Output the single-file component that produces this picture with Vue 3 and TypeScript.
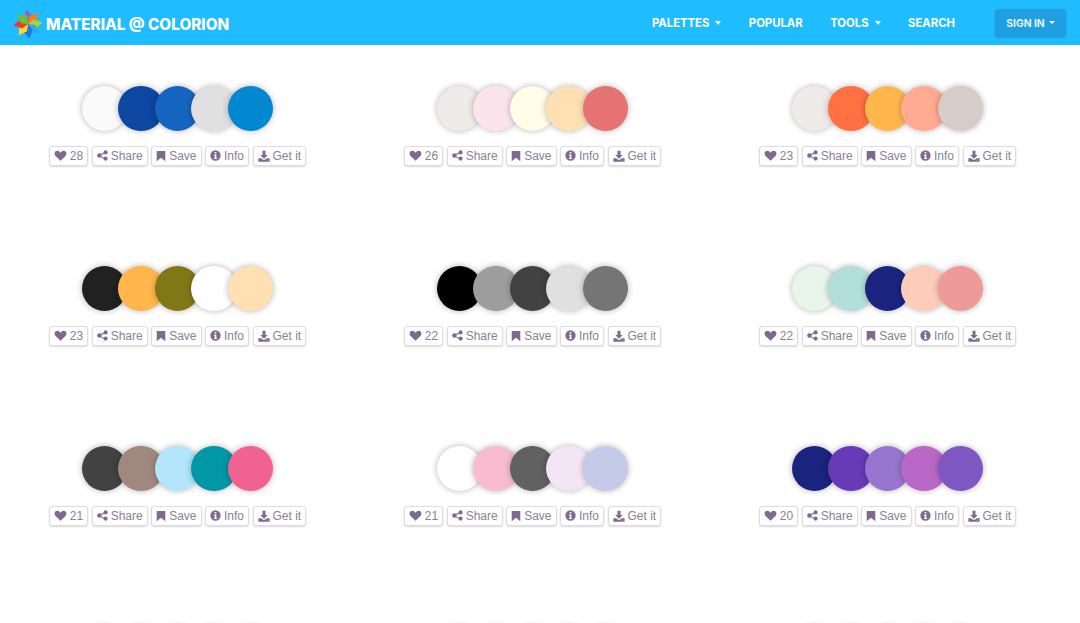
<script setup lang="ts">
const palettes = [
  { likes: 28, colors: ['#fafafa', '#0d47a1', '#1565c0', '#e0e0e0', '#0288d1'] },
  { likes: 26, colors: ['#efebe9', '#fce4ec', '#fffde7', '#ffe0b2', '#e57373'] },
  { likes: 23, colors: ['#efebe9', '#ff7043', '#ffb74d', '#ffab91', '#d7ccc8'] },
  { likes: 23, colors: ['#212121', '#ffb74d', '#827717', '#ffffff', '#ffe0b2'] },
  { likes: 22, colors: ['#000000', '#9e9e9e', '#424242', '#e0e0e0', '#757575'] },
  { likes: 22, colors: ['#e8f5e9', '#b2dfdb', '#1a237e', '#ffccbc', '#ef9a9a'] },
  { likes: 21, colors: ['#424242', '#a1887f', '#b3e5fc', '#0097a7', '#f06292'] },
  { likes: 21, colors: ['#ffffff', '#f8bbd0', '#616161', '#f3e5f5', '#c5cae9'] },
  { likes: 20, colors: ['#1a237e', '#673ab7', '#9575cd', '#ba68c8', '#7e57c2'] },
  { colors: ['#fafafa', '#eeeeee', '#e0e0e0', '#f5f5f5', '#fafafa'] },
  { colors: ['#fafafa', '#eeeeee', '#e0e0e0', '#f5f5f5', '#fafafa'] },
  { colors: ['#fafafa', '#eeeeee', '#e0e0e0', '#f5f5f5', '#fafafa'] }
]

// clockwise from the top of the pinwheel
const petals = ['#8a62c8', '#f57c1f', '#a5d63c', '#2fa8ee', '#1e78d8', '#fdd835', '#ef3b2d', '#66c23a']
</script>

<template>
  <div class="page">
    <header class="navbar">
      <a class="brand">
        <svg class="logo" viewBox="-14 -14 28 28" width="28" height="28">
          <path
            v-for="(color, i) in petals"
            :key="i"
            d="M0 0L-5.500 -5L-4 -14L4.500 -7.500Z"
            :fill="color"
            :transform="`rotate(${i * 45 + 10})`"
          />
        </svg>
        <span>MATERIAL @ COLORION</span>
      </a>
      <nav class="nav">
        <a>PALETTES<i class="caret" /></a>
        <a>POPULAR</a>
        <a>TOOLS<i class="caret" /></a>
        <a>SEARCH</a>
      </nav>
      <button class="signin">SIGN IN<i class="caret small" /></button>
    </header>

    <main class="grid">
      <section v-for="(p, i) in palettes" :key="i" class="palette">
        <div class="circles">
          <span v-for="(c, j) in p.colors" :key="j" class="circle" :style="{ background: c }" />
        </div>
        <div v-if="p.likes" class="actions">
          <button>
            <svg viewBox="0 0 16 16" width="13" height="13"><path d="M8 14.600 1.900 8.500C.2 6.800.3 4.200 2 2.900c1.700-1.200 3.900-.8 5.100.7L8 4.600l.9-1c1.200-1.500 3.400-1.900 5.100-.7 1.700 1.300 1.800 3.900.1 5.600Z" /></svg>
            {{ p.likes }}
          </button>
          <button>
            <svg viewBox="0 0 16 16" width="11" height="11"><circle cx="12.500" cy="3.500" r="3" /><circle cx="12.500" cy="12.500" r="3" /><circle cx="3.500" cy="8" r="3.200" /><path d="M3 7 12 2.800l.6 1.400L4 8.500l8.600 4.300-.6 1.400L3 9Z" /></svg>
            Share
          </button>
          <button>
            <svg viewBox="1 0 14 16" width="10" height="12"><path d="M2 1h12v14.500L8 10.500l-6 5Z" /></svg>
            Save
          </button>
          <button>
            <svg viewBox="0 0 16 16" width="11" height="11"><path fill-rule="evenodd" d="M8 .5a7.500 7.500 0 1 0 0 15 7.500 7.500 0 0 0 0-15ZM6.800 2.800h2.400v2.200H6.800ZM6 6.500h3.200v5H10.200v1.700H5.800v-1.700h1.100V8.200H6Z" /></svg>
            Info
          </button>
          <button>
            <svg viewBox="0 0 16 16" width="12" height="12"><path d="M6 1h4v5.500h3L8 11.500 3 6.500h3Z" /><path fill-rule="evenodd" d="M.5 11h4l2 2h3l2-2h4v4.500H.500ZM12 13h1v1h-1Z" /></svg>
            Get it
          </button>
        </div>
      </section>
    </main>
  </div>
</template>

<style>
html,
body {
  overflow: hidden;
  background: #fff;
}
</style>

<style scoped>
.page {
  height: 623px;
  overflow: hidden;
  font-family: "Liberation Sans", sans-serif;
}
.navbar {
  height: 45px;
  box-sizing: border-box;
  padding: 0 14px;
  display: flex;
  align-items: center;
  background: #1fbcff;
  color: #fff;
  font-family: Inter, "Liberation Sans", sans-serif;
  font-weight: 700;
}
.brand {
  display: flex;
  align-items: center;
  gap: 4px;
  font-size: 15.300px;
  font-weight: 800;
}
.brand span {
  padding-top: 3px;
}
.logo {
  flex: none;
  margin-top: 3px;
}
.nav {
  margin-left: auto;
  display: flex;
  gap: 27.500px;
  font-size: 11.300px;
}
.nav a {
  display: flex;
  align-items: center;
}
.caret {
  display: inline-block;
  margin-left: 6px;
  border-top: 4px solid #fff;
  border-left: 3.500px solid transparent;
  border-right: 3.500px solid transparent;
}
.caret.small {
  margin-left: 4px;
  border-top-width: 3.500px;
}
.signin {
  margin-left: 40px;
  width: 71px;
  height: 28px;
  padding: 0;
  border: 0;
  border-radius: 3px;
  background: #1f9fe2;
  color: #e6f5fd;
  font: inherit;
  font-size: 10.300px;
  box-shadow: 0 1px 2px rgba(0, 0, 0, 0.15);
  display: flex;
  align-items: center;
  justify-content: center;
}
.grid {
  width: 1065px;
  display: grid;
  grid-template-columns: repeat(3, 355px);
  grid-auto-rows: 180px;
  padding-top: 40.500px;
}
.palette {
  display: flex;
  flex-direction: column;
  align-items: center;
  gap: 14px;
}
.circles {
  display: flex;
  height: 46px;
}
.circle {
  width: 45.500px;
  height: 45.500px;
  border-radius: 50%;
  margin-left: -9px;
  box-shadow: 0 0 6px rgba(0, 0, 0, 0.3);
}
.circle:first-child {
  margin-left: 0;
}
.actions {
  display: flex;
  gap: 3.500px;
}
.actions button {
  height: 20px;
  padding: 0 4px;
  box-sizing: border-box;
  display: flex;
  align-items: center;
  gap: 3px;
  border: 1px solid #ddd;
  border-radius: 3px;
  background: #fff;
  color: #8a7f96;
  font-family: "Liberation Sans", sans-serif;
  font-size: 12px;
  white-space: nowrap;
  box-shadow: 0 1px 2px rgba(0, 0, 0, 0.15);
}
.actions svg {
  fill: #80698f;
  flex: none;
}
</style>
